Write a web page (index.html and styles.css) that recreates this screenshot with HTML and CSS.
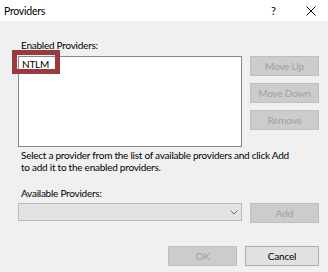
FILE: index.html
```html
<!DOCTYPE html>
<html lang="en">
<head>
  <meta charset="UTF-8">
  <title>Providers</title>
  <link rel="stylesheet" href="styles.css">
</head>
<body>
  <div class="dialog">
    <div class="titlebar">
      <span class="title">Providers</span>
      <span class="help">?</span>
      <svg class="close" width="10" height="10" viewBox="0 0 10 10">
        <path d="M0.5 0.5 L9.5 9.5 M9.5 0.5 L0.5 9.5" stroke="#000" stroke-width="1" fill="none"/>
      </svg>
    </div>

    <div class="content">
      <div class="label">Enabled Providers:</div>
      <div class="list-row">
        <div class="listbox">
          <div class="item">NTLM</div>
          <div class="highlight"></div>
        </div>
        <div class="side-buttons">
          <button class="btn" disabled>Move Up</button>
          <button class="btn" disabled>Move Down</button>
          <button class="btn" disabled>Remove</button>
        </div>
      </div>

      <p class="hint">Select a provider from the list of available providers and click Add<br>to add it to the enabled providers.</p>

      <div class="label label-avail">Available Providers:</div>
      <div class="combo-row">
        <div class="combo">
          <svg class="chevron" width="8" height="5" viewBox="0 0 8 5">
            <path d="M0.5 0.5 L4 4 L7.5 0.5" stroke="#6d6d6d" stroke-width="1" fill="none"/>
          </svg>
        </div>
        <button class="btn" disabled>Add</button>
      </div>

      <div class="footer">
        <button class="btn" disabled>OK</button>
        <button class="btn btn-active">Cancel</button>
      </div>
    </div>
  </div>
</body>
</html>
```

FILE: styles.css
```css
body {
  margin: 0;
  padding: 0;
  background: #f0f0f0;
  font-family: Lato, "Noto Sans", sans-serif;
  font-size: 10px;
  letter-spacing: -0.25px;
  color: #000;
}

.dialog {
  width: 328px;
  height: 272px;
  overflow: hidden;
}

.titlebar {
  height: 21px;
  background: #fff;
  display: flex;
  align-items: center;
  padding-left: 4px;
}

.title {
  font-size: 10.5px;
  flex: 1;
}

.help {
  font-size: 11px;
  width: 10px;
  margin-right: 25px;
}

.close {
  margin-right: 12px;
}

.content {
  padding: 17px 9px 0 18px;
}

.label {
  line-height: 14px;
  padding-left: 3px;
  height: 14px;
}

.list-row {
  display: flex;
  margin-top: 4px;
}

.listbox {
  position: relative;
  box-sizing: border-box;
  width: 224px;
  height: 91px;
  background: #fff;
  border: 1px solid #828790;
}

.item {
  padding: 0 0 0 3px;
  line-height: 14px;
}

/* annotation box drawn over the first entry */
.highlight {
  position: absolute;
  left: -7px;
  top: -7px;
  width: 38px;
  height: 14px;
  border: 5px solid #9b3a3e;
}

.side-buttons {
  display: flex;
  flex-direction: column;
  gap: 7px;
  margin-left: 8px;
}

.btn {
  box-sizing: border-box;
  width: 69px;
  height: 20px;
  padding: 0;
  font-family: inherit;
  font-size: 10px;
  letter-spacing: -0.2px;
  background: #cccccc;
  border: 1px solid #bfbfbf;
  color: #a0a0a0;
}

.btn-active {
  width: 74px;
  background: #e1e1e1;
  border-color: #adadad;
  color: #000;
}

.hint {
  margin: 2px 0 0 3px;
  line-height: 12px;
  white-space: nowrap;
}

.label-avail {
  margin-top: 13px;
}

.combo-row {
  display: flex;
  align-items: flex-start;
  margin-top: 3px;
}

.combo {
  box-sizing: border-box;
  width: 224px;
  height: 18px;
  background: #e3e3e3;
  border: 1px solid #bcbcbc;
  display: flex;
  align-items: center;
  justify-content: flex-end;
  margin-right: 8px;
}

.chevron {
  margin-right: 3px;
}

.footer {
  display: flex;
  justify-content: flex-end;
  gap: 8px;
  margin-top: 23px;
}
```
